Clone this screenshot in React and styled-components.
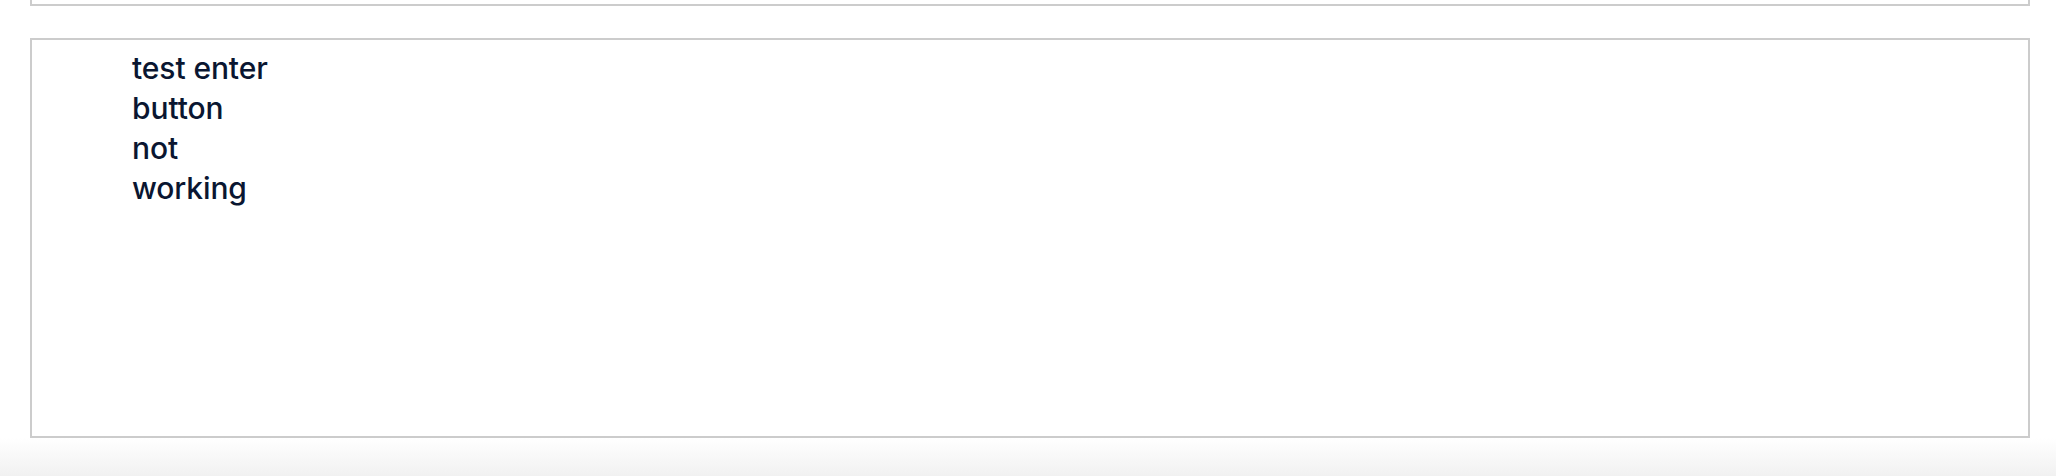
import React from "react";
import styled, { createGlobalStyle } from "styled-components";

const GlobalStyle = createGlobalStyle`
  html, body {
    margin: 0;
    padding: 0;
    background: #ffffff;
  }
  body {
    font-family: Inter, "Noto Sans", sans-serif;
  }
`;

const Page = styled.div`
  display: flex;
  flex-direction: column;
  min-height: 476px;
`;

const Column = styled.div`
  display: flex;
  flex-direction: column;
  gap: 32px;
  padding: 0 26px 0 30px;
`;

const PrevPanel = styled.div`
  height: 4px;
  border: 2px solid #cccccc;
  border-top: none;
`;

const EditorPanel = styled.div`
  box-sizing: border-box;
  height: 400px;
  border: 2px solid #cccccc;
  padding: 8px 0 0 100px;
`;

const Content = styled.div`
  white-space: pre-line;
  font-size: 30px;
  font-weight: 450;
  line-height: 40px;
  color: #0a1631;
  letter-spacing: -0.1px;
`;

const Shade = styled.div`
  flex: 1;
  background: linear-gradient(to bottom, #ffffff, #f1f1f1);
`;

const App = () => {
  return (
    <Page>
      <GlobalStyle />
      <Column>
        <PrevPanel />
        <EditorPanel>
          <Content>{"test enter\nbutton\nnot\nworking"}</Content>
        </EditorPanel>
      </Column>
      <Shade />
    </Page>
  );
};

export default App;
